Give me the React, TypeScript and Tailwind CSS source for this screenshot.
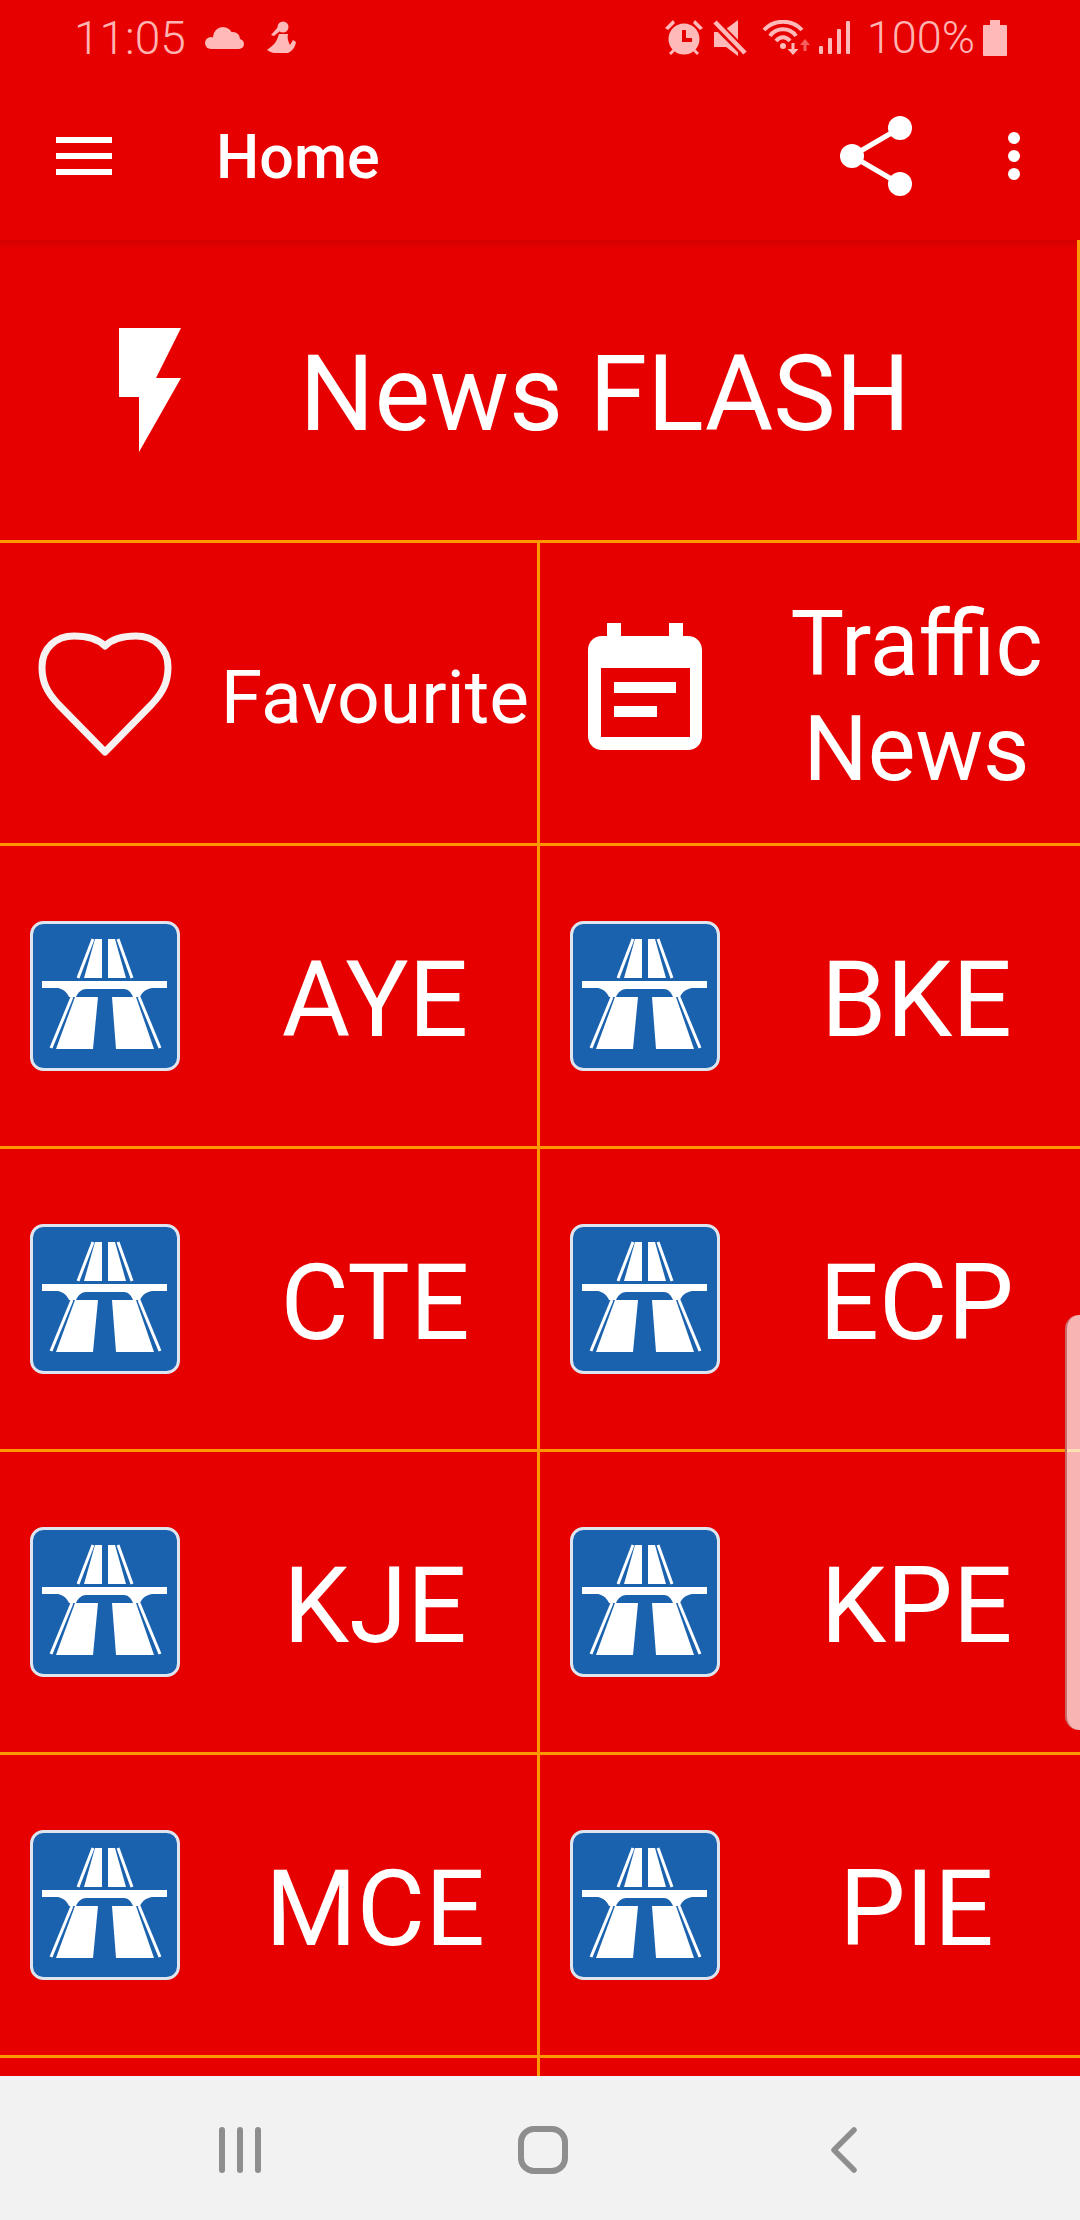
import { ReactNode } from "react";

const statusText = "leading-none font-light text-[#ffb4b4]";

function Cloud() {
  return (
    <svg width="40" height="22" viewBox="0 0 40 22" fill="#ffb9b9">
      <circle cx="18" cy="10" r="10" />
      <circle cx="28" cy="12" r="7" />
      <circle cx="6" cy="16" r="6" />
      <circle cx="34" cy="17" r="5" />
      <rect x="6" y="12" width="28" height="10" />
    </svg>
  );
}

function Runner() {
  return (
    <svg width="30" height="33" viewBox="0 0 30 33" fill="#ffb9b9">
      <circle cx="16" cy="6" r="5.500" />
      <path d="M4 14L11 6L13 10L7 15Z" />
      <path d="M12 13H21C20 17 21 20 23 24L26 19L29 21C28 27 25 30 21 32H8C5 32 2 30 0 29C3 27 6 24 8 22C10 19 11 16 12 13Z" />
    </svg>
  );
}

function Alarm() {
  return (
    <svg width="38" height="36" viewBox="0 0 38 36" fill="#ffb9b9">
      <path d="M0 8L8 0L10 3L3 10Z M38 8L30 0L28 3L35 10Z" />
      <circle cx="19" cy="19" r="15.500" />
      <path d="M4 33L8 29L10 31L6 35Z M34 33L30 29L28 31L32 35Z" />
      <path d="M17 10H21V18H27V22H17Z" fill="#e70000" />
    </svg>
  );
}

function Mute() {
  return (
    <svg width="34" height="36" viewBox="0 0 34 36" fill="#ffb9b9">
      <path d="M1 12H6L25 31V36L13 27H1Z" />
      <path d="M13 9L25 0V21Z" />
      <path d="M2 3L32 33" fill="none" stroke="#e70000" strokeWidth="9" />
      <path d="M2 2L32 33" fill="none" stroke="#ffb9b9" strokeWidth="4.500" />
    </svg>
  );
}

function Wifi() {
  return (
    <svg width="48" height="36" viewBox="0 0 48 36">
      <path d="M2 10C12 -1 30 -1 40 10" fill="none" stroke="#ffb9b9" strokeWidth="4" />
      <path d="M8 16C14 7 28 7 34 16" fill="none" stroke="#ffb9b9" strokeWidth="4" />
      <path d="M14 21C18 16 24 16 28 21" fill="none" stroke="#ffb9b9" strokeWidth="4" />
      <circle cx="21" cy="26" r="3" fill="#ffb9b9" />
      <path d="M29.500 23H32.500V29H36.500L31 35L25.500 29H29.500Z" fill="#ffb9b9" />
      <path d="M43 19L48 25H44.500V31H41.500V25H38Z" fill="#f55f5f" />
    </svg>
  );
}

function Signal() {
  return (
    <svg width="32" height="33" viewBox="0 0 32 33" fill="#ffb9b9">
      <rect x="0" y="25" width="4" height="8" rx="1" />
      <rect x="9" y="17" width="4" height="16" rx="1" />
      <rect x="18" y="8" width="4" height="25" rx="1" />
      <rect x="27" y="0" width="4" height="33" rx="1" />
    </svg>
  );
}

function Battery() {
  return (
    <svg width="24" height="36" viewBox="0 0 24 36" fill="#ffb9b9">
      <path d="M7 0H17V5H23C23.500 5 24 5.500 24 6V35C24 35.500 23.500 36 23 36H1C0.500 36 0 35.500 0 35V6C0 5.500 0.500 5 1 5H7Z" />
    </svg>
  );
}

function Share() {
  return (
    <svg width="72" height="82" viewBox="0 0 72 82" fill="white">
      <path d="M12 41L60 13M12 41L60 69" stroke="white" strokeWidth="5" />
      <circle cx="60" cy="13" r="12" />
      <circle cx="12" cy="41" r="12" />
      <circle cx="60" cy="69" r="12" />
    </svg>
  );
}

function Bolt() {
  return (
    <svg width="62" height="124" viewBox="0 0 62 124" fill="white" className="shrink-0 blur-[0.5px]">
      <path d="M0 0H62L37 50H62L20 124V69H0Z" />
    </svg>
  );
}

function Heart() {
  return (
    <svg width="134" height="125" viewBox="0 0 134 125" className="shrink-0 blur-[0.6px]">
      <path
        d="M67 15C60 8 50 5 36 5C18 5 4 17 4 36C4 50 8 60 20 73L67 121L114 73C126 60 130 50 130 36C130 17 116 5 98 5C84 5 74 8 67 15Z"
        fill="none"
        stroke="#f6f2f2"
        strokeWidth="7"
        strokeLinejoin="round"
      />
    </svg>
  );
}

function Calendar() {
  return (
    <svg width="114" height="127" viewBox="0 0 114 127" className="mb-[13px] shrink-0 blur-[0.5px]">
      <path
        d="M19 0H33V13H81V0H95V13H100C108 13 114 19 114 27V113C114 121 108 127 100 127H14C6 127 0 121 0 113V27C0 19 6 13 14 13H19Z"
        fill="white"
      />
      <rect x="13" y="45" width="89" height="69" fill="#e70000" />
      <rect x="26" y="59" width="62" height="11" fill="white" />
      <rect x="26" y="83" width="43" height="11" fill="white" />
    </svg>
  );
}

// the blue expressway sign used on every road button
function RoadSign() {
  return (
    <svg width="150" height="150" viewBox="0 0 150 150" className="shrink-0 blur-[0.6px]">
      <rect x="1.500" y="1.500" width="147" height="147" rx="12" fill="#1a62ae" stroke="#dfe5ee" strokeWidth="3" />
      <g fill="white">
        <path d="M65 18H72V57H54Z" />
        <path d="M78 18H85L96 57H78Z" />
        <path d="M45 76H68L63 128H26Z" />
        <path d="M82 76H106L124 128H86Z" />
        <path d="M12 60H137V67H122C116 68 112 71 110 76H103C101 71 98 68 94 68H56C52 68 48 71 46 76H39C37 71 33 68 28 67H12Z" />
      </g>
      <g stroke="white" strokeWidth="3" fill="none">
        <path d="M63 18L48 57" />
        <path d="M88 18L102 57" />
        <path d="M42 76L21 127" />
        <path d="M109 76L130 127" />
      </g>
    </svg>
  );
}

function Cell({ icon, label, size = "text-[105px] leading-none", border = true }: { icon: ReactNode; label: ReactNode; size?: string; border?: boolean }) {
  return (
    <div className={`flex h-[300px] items-center pl-[30px] ${border ? "border-r-[3px] border-[#ff9800]" : ""}`}>
      <div className="flex w-[150px] shrink-0 justify-center">{icon}</div>
      <div className={`ml-[33px] flex-1 pt-[8px] text-center text-white ${size}`}>{label}</div>
    </div>
  );
}

const roads = [
  ["AYE", "BKE"],
  ["CTE", "ECP"],
  ["KJE", "KPE"],
  ["MCE", "PIE"],
];

export default function App() {
  return (
    <div className="relative flex h-[2220px] w-[1080px] flex-col overflow-hidden bg-[#e70000] font-['Roboto',sans-serif]">
      {/* status bar */}
      <div className="flex h-[72px] shrink-0 items-center pt-[3px] pr-[73px] pl-[74px]">
        <span className={`text-[46px] ${statusText}`}>11:05</span>
        <div className="ml-[19px]"><Cloud /></div>
        <div className="ml-[22px]"><Runner /></div>
        <div className="ml-auto"><Alarm /></div>
        <div className="ml-[10px]"><Mute /></div>
        <div className="ml-[15px]"><Wifi /></div>
        <div className="ml-[9px]"><Signal /></div>
        <span className={`ml-[16px] text-[45px] ${statusText}`}>100%</span>
        <div className="ml-[8px]"><Battery /></div>
      </div>

      {/* toolbar */}
      <div className="relative z-10 flex h-[168px] shrink-0 items-center pr-[60px] pl-[56px]">
        <div className="flex w-[56px] flex-col gap-[10px]">
          <div className="h-[6px] bg-white" />
          <div className="h-[6px] bg-white" />
          <div className="h-[6px] bg-white" />
        </div>
        <div className="ml-[104px] pt-[2px] text-[61px] leading-none font-medium text-white">Home</div>
        <div className="ml-auto"><Share /></div>
        <div className="ml-[96px] flex flex-col gap-[6px]">
          <div className="h-[12px] w-[12px] rounded-full bg-white" />
          <div className="h-[12px] w-[12px] rounded-full bg-white" />
          <div className="h-[12px] w-[12px] rounded-full bg-white" />
        </div>
      </div>

      {/* menu buttons */}
      <div className="relative min-h-0 flex-1 overflow-hidden">
        <div className="absolute top-0 right-[3px] left-0 z-10 h-[10px] bg-gradient-to-b from-[#d40000] to-[#e70000]" />
        <div className="flex h-[303px] items-center border-r-[3px] border-b-[3px] border-[#ff9800] pr-[48px] pl-[119px]">
          <Bolt />
          <div className="flex-1 pt-[8px] text-center text-[105px] leading-none text-white">News FLASH</div>
        </div>
        <div className="grid grid-cols-2">
          <div className="border-b-[3px] border-[#ff9800]">
            <Cell icon={<Heart />} label="Favourite" size="text-[75px] leading-none" />
          </div>
          <div className="border-b-[3px] border-[#ff9800]">
            <Cell
              icon={<Calendar />}
              label={<>Traffic<br />News</>}
              size="text-[90px] leading-[105px]"
              border={false}
            />
          </div>
          {roads.flat().map((road, i) => (
            <div key={road} className="border-b-[3px] border-[#ff9800]">
              <Cell icon={<RoadSign />} label={road} border={i % 2 === 0} />
            </div>
          ))}
          <div className="h-[30px] border-r-[3px] border-[#ff9800]" />
        </div>
      </div>

      {/* scroll thumb */}
      <div className="absolute top-[1315px] right-0 h-[415px] w-[15px] rounded-l-[14px] border-l-[2px] border-[#c96a6a] bg-white/70" />

      {/* nav bar */}
      <div className="flex h-[144px] shrink-0 items-center bg-[#f2f2f2] pt-[3px]">
        <svg width="42" height="46" viewBox="0 0 42 46" fill="#8e8e8e" className="ml-[219px]">
          <rect x="0" y="0" width="6" height="46" rx="3" />
          <rect x="18" y="0" width="6" height="46" rx="3" />
          <rect x="36" y="0" width="6" height="46" rx="3" />
        </svg>
        <div className="ml-[257px] h-[48px] w-[50px] rounded-[16px] border-[6px] border-[#8e8e8e]" />
        <svg width="26" height="46" viewBox="0 0 26 46" className="ml-[263px]">
          <path d="M23 3L3 23L23 43" fill="none" stroke="#8e8e8e" strokeWidth="5.500" strokeLinecap="round" strokeLinejoin="round" />
        </svg>
      </div>
    </div>
  );
}
